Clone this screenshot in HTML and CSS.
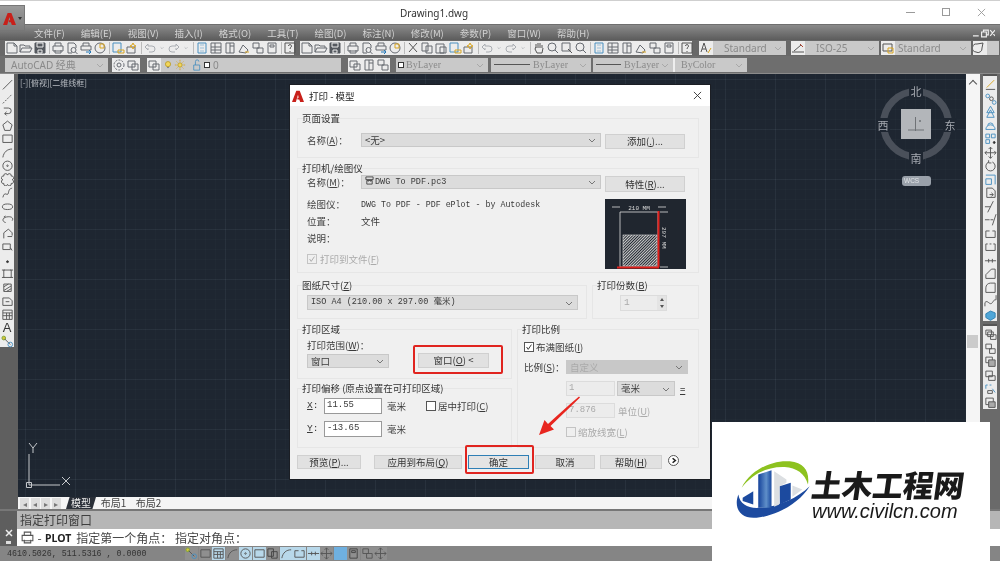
FILE: index.html
```html
<!DOCTYPE html>
<html lang="zh">
<head>
<meta charset="utf-8">
<title>Drawing1.dwg</title>
<link rel="stylesheet" href="styles.css">
</head>
<body>
<svg class="defs" width="0" height="0">
<defs>
<symbol id="new" viewBox="0 0 14 14"><path d="M2 2h7l3 3v7H2zM9 2v3h3"/></symbol>
<symbol id="open" viewBox="0 0 14 14"><path d="M1 11V4h4l1 1h5v2M1 11l2-4h10l-2 4z"/></symbol>
<symbol id="save" viewBox="0 0 14 14"><path class="f" d="M2 2h10v10H2z"/><path class="w" d="M4 2h6v4H4zM5 9h4v3H5z"/></symbol>
<symbol id="print" viewBox="0 0 14 14"><path d="M4 5V2h6v3M2 5h10v5H2zM4 9v3h6V9"/></symbol>
<symbol id="prev" viewBox="0 0 14 14"><path d="M3 2h6l2 2v3M3 2v10h4"/><circle cx="8.500" cy="9" r="2.500"/><path d="M10.500 11l2 2"/></symbol>
<symbol id="pub" viewBox="0 0 14 14"><path d="M4 5V2h6v3M2 5h10v4H2z"/><path class="b" d="M7 11h5M10 9l2 2-2 2"/></symbol>
<symbol id="globe" viewBox="0 0 14 14"><circle cx="7" cy="7" r="5"/><path class="y" d="M7 3h4v4H7z"/></symbol>
<symbol id="setup" viewBox="0 0 14 14"><path class="bl" d="M2 2h8v9H2z"/><path class="y" d="M7 9h6v3H7z"/></symbol>
<symbol id="cam" viewBox="0 0 14 14"><path d="M2 6h8v6H2z"/><path class="y" d="M8 2l1 2 2 1-2 1-1 2-1-2-2-1 2-1z"/></symbol>
<symbol id="undo" viewBox="0 0 14 14"><path class="g" d="M2 6l3-3v2h4a3 3 0 0 1 0 6H6M2 6l3 3V7"/></symbol>
<symbol id="redo" viewBox="0 0 14 14"><path class="g" d="M12 6L9 3v2H5a3 3 0 0 0 0 6h3M12 6L9 9V7"/></symbol>
<symbol id="drop" viewBox="0 0 14 14"><path class="g" d="M5 6l2 2 2-2"/></symbol>
<symbol id="props" viewBox="0 0 14 14"><path class="bl" d="M3 2h8v10H3z"/><path class="w2" d="M5 4h4M5 7h4M5 10h4"/></symbol>
<symbol id="design" viewBox="0 0 14 14"><path d="M2 2h10v10H2zM2 6h10M6 2v10M2 9h10"/></symbol>
<symbol id="tool" viewBox="0 0 14 14"><path d="M3 2h8v10H3zM7 2v10M7 5h4"/></symbol>
<symbol id="sheet" viewBox="0 0 14 14"><path d="M2 11l4-7 5 5-2 3z"/><path class="y" d="M8 11h4"/></symbol>
<symbol id="mark" viewBox="0 0 14 14"><path d="M2 2h6v5H2zM6 7h6v5H6z"/></symbol>
<symbol id="calc" viewBox="0 0 14 14"><path d="M3 2h8v10H3zM5 4h4v2H5z"/></symbol>
<symbol id="help" viewBox="0 0 14 14"><path class="k" d="M2 2h10v10H2zM5.500 5a1.500 1.500 0 1 1 2 1.500L7 8M7 10v1"/></symbol>
<symbol id="cut" viewBox="0 0 14 14"><path class="k" d="M3 2l8 9M11 2l-8 9"/></symbol>
<symbol id="copy" viewBox="0 0 14 14"><path d="M2 2h6v8H2zM6 5h6v7H6z"/></symbol>
<symbol id="paste" viewBox="0 0 14 14"><path d="M2 3h8v9H2zM6 6h6v6H6z"/></symbol>
<symbol id="hand" viewBox="0 0 14 14"><path class="k" d="M4 7V3M6 7V2M8 7V2M10 7V4M4 6L3 8l2 4h5l1-5"/></symbol>
<symbol id="zoom" viewBox="0 0 14 14"><circle cx="6" cy="6" r="4"/><path d="M9 9l3 3"/></symbol>
<symbol id="zoomw" viewBox="0 0 14 14"><path d="M2 2h8v8H2z"/><path class="k" d="M8 8l4 4"/></symbol>
<symbol id="gear" viewBox="0 0 14 14"><circle cx="7" cy="7" r="2"/><circle cx="7" cy="7" r="5" stroke-dasharray="2 1.200"/></symbol>
<symbol id="layer" viewBox="0 0 14 14"><path d="M2 3h7v6H2zM6 6h6v6H6z"/></symbol>
<symbol id="bulb" viewBox="0 0 14 14"><circle class="yf" cx="7" cy="6" r="3"/><path d="M6 10h2"/></symbol>
<symbol id="sun" viewBox="0 0 14 14"><circle class="yf" cx="7" cy="7" r="2.500"/><path class="y" d="M7 1v2M7 11v2M1 7h2M11 7h2M3 3l1 1M10 10l1 1M3 11l1-1M10 4l1-1"/></symbol>
<symbol id="lock" viewBox="0 0 14 14"><path class="bl" d="M2 7h7v6H2zM4 7V3a2 2 0 0 1 4 0"/></symbol>
<symbol id="textst" viewBox="0 0 14 14"><path class="k" d="M2 11l3-9 3 9M3 8h4"/><path class="y" d="M9 12l3-5"/></symbol>
<symbol id="dimst" viewBox="0 0 14 14"><path class="k" d="M1 11h12M3 10l7-6"/><path class="r" d="M9 3l3 3"/></symbol>
<symbol id="tabst" viewBox="0 0 14 14"><path class="k" d="M2 3h9v7H2z"/><path class="y" d="M7 7h5v5H7z"/></symbol>
<symbol id="mlst" viewBox="0 0 14 14"><path class="k" d="M3 11a4 4 0 0 1 1-8l6-1-1 5a4 4 0 0 1-6 4"/></symbol>

<symbol id="line" viewBox="0 0 14 14"><path class="k" d="M2 12L12 2"/></symbol>
<symbol id="xline" viewBox="0 0 14 14"><path class="k" d="M2 12L12 2" stroke-dasharray="2 1.500"/></symbol>
<symbol id="pline" viewBox="0 0 14 14"><path class="k" d="M3 3h5a3 3 0 0 1 0 6H4l2-2M4 9l2 2"/></symbol>
<symbol id="polyg" viewBox="0 0 14 14"><path class="k" d="M7 2l5 4-2 6H4L2 6z"/></symbol>
<symbol id="rect" viewBox="0 0 14 14"><path class="k" d="M2 3h10v8H2z"/></symbol>
<symbol id="arc" viewBox="0 0 14 14"><path class="k" d="M2 12C3 6 7 3 12 3"/></symbol>
<symbol id="circ" viewBox="0 0 14 14"><circle class="k" cx="7" cy="7" r="5"/><circle class="k" cx="7" cy="7" r=".8"/></symbol>
<symbol id="cloud" viewBox="0 0 14 14"><path class="k" d="M3 3a2 2 0 0 1 4-1 2 2 0 0 1 4 1 2 2 0 0 1 1 4 2 2 0 0 1-1 4 2 2 0 0 1-4 1 2 2 0 0 1-4-1 2 2 0 0 1-1-4 2 2 0 0 1 1-4z"/></symbol>
<symbol id="spl" viewBox="0 0 14 14"><path class="k" d="M2 12C4 4 7 12 8 7s2-4 4-5"/></symbol>
<symbol id="ell" viewBox="0 0 14 14"><ellipse class="k" cx="7" cy="7" rx="5.500" ry="3"/></symbol>
<symbol id="ellarc" viewBox="0 0 14 14"><path class="k" d="M5 10C1 9 1 5 6 4s8 1 6 4"/><path class="k" d="M3 4l2-1"/></symbol>
<symbol id="ins" viewBox="0 0 14 14"><path class="k" d="M3 12V6l5-4 4 4v3M7 10h5"/></symbol>
<symbol id="blk" viewBox="0 0 14 14"><path class="k" d="M2 4h8v6H2zM10 8l2 3"/></symbol>
<symbol id="pt" viewBox="0 0 14 14"><circle class="kf" cx="7" cy="8" r="1"/></symbol>
<symbol id="hat" viewBox="0 0 14 14"><path class="k" d="M3 3h8v8H3zM1 3h3M10 3h3M1 11h3M10 11h3"/></symbol>
<symbol id="grad" viewBox="0 0 14 14"><path class="k" d="M3 3h8v8H3zM3 6l5-3M3 10l8-5M6 11l5-3"/></symbol>
<symbol id="reg" viewBox="0 0 14 14"><path class="k" d="M2 4h7l3 3v5H2zM5 8h4"/></symbol>
<symbol id="tab" viewBox="0 0 14 14"><path class="k" d="M2 2h10v10H2zM2 5h10M2 8h10M6 5v7M9 5v7"/></symbol>
<symbol id="addpt" viewBox="0 0 14 14"><circle class="yf2" cx="3" cy="3" r="2"/><path class="k" d="M4 4l6 6"/><circle class="bl" cx="10" cy="10" r="2.500"/></symbol>

<symbol id="erase" viewBox="0 0 14 14"><path class="k" d="M2 12h10"/><path class="y" d="M3 10l8-8"/></symbol>
<symbol id="cpo" viewBox="0 0 14 14"><circle class="bl" cx="4" cy="4" r="2"/><circle class="k" cx="8" cy="7" r="2"/><circle class="bl" cx="11" cy="11" r="2"/></symbol>
<symbol id="mir" viewBox="0 0 14 14"><path class="bl" d="M7 1L3 8h8zM7 5l-4 8h8z"/></symbol>
<symbol id="off" viewBox="0 0 14 14"><path class="bl" d="M2 11a5 5 0 0 1 10 0zM4 7a3 3 0 0 1 6 0"/></symbol>
<symbol id="arr" viewBox="0 0 14 14"><path class="bl" d="M2 2h4v4H2zM8 2h4v4H8zM2 8h4v4H2z"/><circle class="kf" cx="11" cy="11" r="1"/></symbol>
<symbol id="mov" viewBox="0 0 14 14"><path class="k" d="M7 1v12M1 7h12M5 3l2-2 2 2M5 11l2 2 2-2M3 5L1 7l2 2M11 5l2 2-2 2"/></symbol>
<symbol id="rot" viewBox="0 0 14 14"><path class="k" d="M5 3a5 5 0 1 0 4 0M5 1v3h3"/></symbol>
<symbol id="scl" viewBox="0 0 14 14"><path class="bl" d="M2 6h6v6H2zM2 2h10v10"/></symbol>
<symbol id="str" viewBox="0 0 14 14"><path class="k" d="M3 2h6l3 3v7H3zM6 9h4M8 7l2 2-2 2"/></symbol>
<symbol id="trim" viewBox="0 0 14 14"><path class="k" d="M4 13L10 1M1 7h6"/></symbol>
<symbol id="ext" viewBox="0 0 14 14"><path class="k" d="M9 13l4-12M1 7h5M7 7h3"/></symbol>
<symbol id="brk" viewBox="0 0 14 14"><path class="k" d="M2 11V4h4M9 4h3v7H2"/></symbol>
<symbol id="brk2" viewBox="0 0 14 14"><path class="k" d="M2 11V4h2M6 4h2M10 4h2v7H2"/></symbol>
<symbol id="join" viewBox="0 0 14 14"><path class="k" d="M1 7h12M5 5v4M9 5v4"/></symbol>
<symbol id="cham" viewBox="0 0 14 14"><path class="k" d="M2 12V8l6-6h4v10z"/></symbol>
<symbol id="fil" viewBox="0 0 14 14"><path class="k" d="M2 12V7a5 5 0 0 1 5-5h5v10z"/></symbol>
<symbol id="blend" viewBox="0 0 14 14"><path class="k" d="M1 13V9M13 1v5M1 9c3-4 5 4 8 0s2-3 4-3"/></symbol>
<symbol id="expl" viewBox="0 0 14 14"><path class="bf" d="M2 6l5-3 5 2v5l-5 3-5-3z"/></symbol>
<symbol id="d1" viewBox="0 0 14 14"><path class="k" d="M2 2h6v5H2zM4 4h6v5H4zM7 7h6v5H7z"/></symbol>
<symbol id="d2" viewBox="0 0 14 14"><path class="k" d="M2 2h6v5H2zM6 7h6v5H6z"/></symbol>
<symbol id="d3" viewBox="0 0 14 14"><path class="k" d="M2 2h7v6H2z"/><path class="gf" d="M5 5h7v7H5z"/></symbol>
<symbol id="d4" viewBox="0 0 14 14"><path class="k" d="M2 2h7v6H2zM5 7h7v5H5z"/></symbol>
<symbol id="d5" viewBox="0 0 14 14"><path class="bl" d="M2 3h2M6 3h2M2 3v4M9 7l3 4"/><path class="k" d="M4 9h5v3H4z"/></symbol>
<symbol id="d6" viewBox="0 0 14 14"><path class="k" d="M2 2h8v7H2z"/><path class="gf" d="M5 6h7v6H5z"/></symbol>

<symbol id="chev" viewBox="0 0 10 10"><path d="M2 4l3 3 3-3"/></symbol>
<symbol id="logoA" viewBox="0 0 14 14"><path class="ared" d="M0 14L5 1h4l5 13H9.500l-1-3H6.300V9h1.500L7 5.500 4.500 14z"/></symbol>
</defs>
</svg>

<div class="stage">
  <header class="titlebar">
    <div class="doc-title">Drawing1.dwg</div>
    <div class="win-btns">
      <span class="wb wb-min"></span>
      <span class="wb wb-max"></span>
      <svg class="wb-x" viewBox="0 0 10 10"><path d="M1 1l8 8M9 1l-8 8"/></svg>
    </div>
  </header>

  <nav class="menubar">
    <span>文件(F)</span><span>编辑(E)</span><span>视图(V)</span><span>插入(I)</span><span>格式(O)</span><span>工具(T)</span><span>绘图(D)</span><span>标注(N)</span><span>修改(M)</span><span>参数(P)</span><span>窗口(W)</span><span>帮助(H)</span>
    <svg class="menu-ctl" viewBox="0 0 24 10"><path d="M1 8h6M10 4h5v5h-5zM12 4V2h5v5h-2M19 2l5 6M24 2l-5 6"/></svg>
  </nav>

  <div class="tbar tbar-1">
    <div class="igroup igroup-a">
      <svg class="i"><use href="#new"/></svg><svg class="i"><use href="#open"/></svg><svg class="i"><use href="#save"/></svg><i class="sep"></i>
      <svg class="i"><use href="#print"/></svg><svg class="i"><use href="#prev"/></svg><svg class="i"><use href="#pub"/></svg><svg class="i"><use href="#globe"/></svg><i class="sep"></i>
      <svg class="i"><use href="#setup"/></svg><svg class="i"><use href="#cam"/></svg><i class="sep"></i>
      <svg class="i"><use href="#undo"/></svg><svg class="i i-n"><use href="#drop"/></svg><svg class="i"><use href="#redo"/></svg><svg class="i i-n"><use href="#drop"/></svg><i class="sep"></i>
      <svg class="i"><use href="#props"/></svg><svg class="i"><use href="#design"/></svg><svg class="i"><use href="#tool"/></svg><svg class="i"><use href="#sheet"/></svg><svg class="i"><use href="#mark"/></svg><svg class="i"><use href="#calc"/></svg><i class="sep"></i><svg class="i"><use href="#help"/></svg>
    </div>
    <div class="igroup igroup-b">
      <svg class="i"><use href="#new"/></svg><svg class="i"><use href="#open"/></svg><svg class="i"><use href="#save"/></svg><i class="sep"></i>
      <svg class="i"><use href="#print"/></svg><svg class="i"><use href="#prev"/></svg><svg class="i"><use href="#pub"/></svg><svg class="i"><use href="#globe"/></svg><i class="sep"></i>
      <svg class="i"><use href="#cut"/></svg><svg class="i"><use href="#copy"/></svg><svg class="i"><use href="#paste"/></svg><svg class="i"><use href="#setup"/></svg><svg class="i"><use href="#cam"/></svg><i class="sep"></i>
      <svg class="i"><use href="#undo"/></svg><svg class="i i-n"><use href="#drop"/></svg><svg class="i"><use href="#redo"/></svg><svg class="i i-n"><use href="#drop"/></svg><i class="sep"></i>
      <svg class="i"><use href="#hand"/></svg><svg class="i"><use href="#zoom"/></svg><svg class="i"><use href="#zoomw"/></svg><svg class="i"><use href="#zoom"/></svg><i class="sep"></i>
      <svg class="i"><use href="#props"/></svg><svg class="i"><use href="#design"/></svg><svg class="i"><use href="#tool"/></svg><svg class="i"><use href="#sheet"/></svg><svg class="i"><use href="#mark"/></svg><svg class="i"><use href="#calc"/></svg><i class="sep"></i><svg class="i"><use href="#help"/></svg>
    </div>
    <svg class="i i-box ib-a"><use href="#textst"/></svg>
    <div class="combo combo-std1">Standard<svg class="cv"><use href="#chev"/></svg></div>
    <svg class="i i-box ib-b"><use href="#dimst"/></svg>
    <div class="combo combo-iso">ISO-25<svg class="cv"><use href="#chev"/></svg></div>
    <svg class="i i-box ib-c"><use href="#tabst"/></svg>
    <div class="combo combo-std2">Standard<svg class="cv"><use href="#chev"/></svg></div>
    <svg class="i i-box ib-d"><use href="#mlst"/></svg>
    <div class="combo combo-rest"></div>
  </div>

  <div class="tbar tbar-2">
    <div class="combo combo-work">AutoCAD 经典<svg class="cv"><use href="#chev"/></svg></div>
    <div class="igroup igroup-c"><svg class="i"><use href="#gear"/></svg><svg class="i"><use href="#layer"/></svg></div>
    <svg class="i i-box ib-e"><use href="#layer"/></svg>
    <div class="combo combo-layer">
      <svg class="i i-n2"><use href="#bulb"/></svg><svg class="i i-n2"><use href="#sun"/></svg><svg class="i i-n3"></svg><svg class="i i-n2"><use href="#lock"/></svg><span class="swatch"></span><span class="layer-0">0</span>
    </div>
    <div class="igroup igroup-d"><svg class="i"><use href="#layer"/></svg><svg class="i"><use href="#tool"/></svg><svg class="i"><use href="#mark"/></svg></div>
    <div class="combo combo-by mono combo-by1"><span class="swatch"></span>ByLayer<svg class="cv"><use href="#chev"/></svg></div>
    <div class="combo combo-by mono combo-by2"><i class="ln ln-a"></i>ByLayer<svg class="cv"><use href="#chev"/></svg></div>
    <div class="combo combo-by mono combo-by3"><i class="ln ln-b"></i>ByLayer<svg class="cv"><use href="#chev"/></svg></div>
    <div class="combo combo-by mono combo-by4">ByColor<svg class="cv"><use href="#chev"/></svg></div>
  </div>

  <main class="workspace">
    <aside class="side-left">
      <div class="side-tools">
        <svg class="s"><use href="#line"/></svg><svg class="s"><use href="#xline"/></svg><svg class="s"><use href="#pline"/></svg><svg class="s"><use href="#polyg"/></svg><svg class="s"><use href="#rect"/></svg><svg class="s"><use href="#arc"/></svg><svg class="s"><use href="#circ"/></svg><svg class="s"><use href="#cloud"/></svg><svg class="s"><use href="#spl"/></svg><svg class="s"><use href="#ell"/></svg><svg class="s"><use href="#ellarc"/></svg><svg class="s"><use href="#ins"/></svg><svg class="s"><use href="#blk"/></svg><svg class="s"><use href="#pt"/></svg><svg class="s"><use href="#hat"/></svg><svg class="s"><use href="#grad"/></svg><svg class="s"><use href="#reg"/></svg><svg class="s"><use href="#tab"/></svg><span class="s-text">A</span><svg class="s"><use href="#addpt"/></svg>
      </div>
    </aside>
    <div class="canvas-col">
      <div class="canvas">
        <div class="viewlabel">[-][俯视][二维线框]</div>
        <div class="compass">
          <div class="ring"></div>
          <div class="cube"><svg viewBox="0 0 30 30" class="cube-svg"><path d="M14.500 8v14M7 21h16M18 12h2M19 11v2"/></svg></div>
          <span class="dir d-n">北</span><span class="dir d-s">南</span><span class="dir d-w">西</span><span class="dir d-e">东</span>
          <span class="wcs">WCS</span>
        </div>
        <svg class="ucs" viewBox="0 -5 50 55"><path d="M9 9v31M9 40h31M6.500 37.500h5v5h-5zM42 32l8 8M50 32l-8 8M13 3v5M13 3L9 -2M13 3l4-5"/></svg>
      </div>
      <div class="tabs">
        <div class="navs"><span>◂</span><span>◂</span><span>▸</span><span>▸</span></div>
        <span class="tab tab-on">模型</span><span class="tab">布局1</span><span class="tab">布局2</span>
      </div>
    </div>
    <div class="scroll"><span class="up"></span><span class="thumb"></span></div>
    <aside class="side-right">
      <div class="rgroup">
        <svg class="s"><use href="#erase"/></svg><svg class="s"><use href="#cpo"/></svg><svg class="s"><use href="#mir"/></svg><svg class="s"><use href="#off"/></svg><svg class="s"><use href="#arr"/></svg><svg class="s"><use href="#mov"/></svg><svg class="s"><use href="#rot"/></svg><svg class="s"><use href="#scl"/></svg><svg class="s"><use href="#str"/></svg><svg class="s"><use href="#trim"/></svg><svg class="s"><use href="#ext"/></svg><svg class="s"><use href="#brk"/></svg><svg class="s"><use href="#brk2"/></svg><svg class="s"><use href="#join"/></svg><svg class="s"><use href="#cham"/></svg><svg class="s"><use href="#fil"/></svg><svg class="s"><use href="#blend"/></svg><svg class="s"><use href="#expl"/></svg>
      </div>
      <div class="rgroup rgroup-2">
        <svg class="s"><use href="#d1"/></svg><svg class="s"><use href="#d2"/></svg><svg class="s"><use href="#d3"/></svg><svg class="s"><use href="#d4"/></svg><svg class="s"><use href="#d5"/></svg><svg class="s"><use href="#d6"/></svg>
      </div>
    </aside>
  </main>

  <section class="cmd">
    <div class="cmd-side">
      <svg class="cmd-x" viewBox="0 0 10 10"><path d="M2 2l6 6M8 2l-6 6"/></svg>
      <span class="cmd-mini"></span>
    </div>
    <div class="cmd-main">
      <div class="cmd-hist">指定打印窗口</div>
      <div class="cmd-line">
        <svg class="cmd-ico"><use href="#print"/></svg><span class="cmd-dash">-</span><b>PLOT</b><span>指定第一个角点： 指定对角点：</span>
      </div>
    </div>
  </section>

  <footer class="status">
    <div class="coords">4610.5026, 511.5316 , 0.0000</div>
    <div class="st-icons">
      <svg class="st"><use href="#addpt"/></svg><svg class="st"><use href="#rect"/></svg><svg class="st st-on"><use href="#tab"/></svg><svg class="st"><use href="#arc"/></svg><svg class="st st-on"><use href="#circ"/></svg><svg class="st st-on"><use href="#rect"/></svg><svg class="st"><use href="#copy"/></svg><svg class="st st-on"><use href="#arc"/></svg><svg class="st st-on"><use href="#brk"/></svg><svg class="st st-on"><use href="#join"/></svg><svg class="st"><use href="#mov"/></svg><span class="st-big"></span><svg class="st"><use href="#calc"/></svg><svg class="st"><use href="#d2"/></svg><svg class="st"><use href="#mov"/></svg>
    </div>
  </footer>

  <div class="appbtn"><svg class="appA"><use href="#logoA"/></svg><span class="appdrop"></span></div>

  <div class="dlg">
    <div class="dlg-title">
      <svg class="dlg-ico"><use href="#logoA"/></svg>
      <span>打印 - 模型</span>
      <svg class="dlg-x" viewBox="0 0 10 10"><path d="M1 1l8 8M9 1l-8 8"/></svg>
    </div>
    <div class="dlg-body">
      <div class="grp">
        <span class="glabel">页面设置</span>
        <div class="gbox g-page">
          <div class="frow">
            <span class="lb lb-name">名称(<u>A</u>)：</span>
            <div class="sel s-name">&lt;无&gt;<svg class="cv"><use href="#chev"/></svg></div>
            <div class="btn b-side">添加(<u>.</u>)...</div>
          </div>
        </div>
      </div>

      <div class="grp grp-printer">
        <span class="glabel">打印机/绘图仪</span>
        <div class="gbox g-printer">
          <div class="frow">
            <span class="lb lb-name">名称(<u>M</u>)：</span>
            <div class="sel s-name s-mono"><svg class="plotter" viewBox="0 0 10 10"><path d="M1 1h8v3H1zM2 5h6v4H2zM3 6h1M6 6h1"/></svg>DWG To PDF.pc3<svg class="cv"><use href="#chev"/></svg></div>
            <div class="btn b-side b-tall">特性(<u>R</u>)...</div>
          </div>
          <div class="pr-detail">
            <div class="pr-info">
              <div class="info"><span class="lb lb-name">绘图仪：</span><span class="mono">DWG To PDF - PDF ePlot - by Autodesk</span></div>
              <div class="info"><span class="lb lb-name">位置：</span><span>文件</span></div>
              <div class="info"><span class="lb lb-name">说明：</span></div>
              <div class="info info-chk off"><span class="chk chk-off"><svg viewBox="0 0 10 10"><path d="M2 5l2 3 4-6"/></svg></span>打印到文件(<u>F</u>)</div>
            </div>
            <svg class="paper" viewBox="0 0 81 70">
              <defs><pattern id="hatch" width="2" height="2" patternUnits="userSpaceOnUse" patternTransform="rotate(45)"><rect width="1" height="2" fill="#cfcfcf"/></pattern></defs>
              <rect width="81" height="70" fill="#20262f"/>
              <path class="pw" d="M15 13h38v55H15z"/>
              <rect x="18" y="36" width="34" height="31" fill="url(#hatch)" stroke="#ddd" stroke-width=".6"/>
              <path class="pw" d="M7 8h8M53 8h8M55 13h8M55 68h8"/>
              <text class="ptxt" x="34" y="11" text-anchor="middle">210 MM</text>
              <text class="ptxt" x="0" y="0" transform="translate(57 28) rotate(90)">297 MM</text>
              <path class="pr" d="M53.500 12v56M12 68.500h42"/>
            </svg>
          </div>
        </div>
      </div>

      <div class="two-top">
        <div class="grp grp-paper">
          <span class="glabel">图纸尺寸(<u>Z</u>)</span>
          <div class="gbox g-paper">
            <div class="sel s-paper s-mono">ISO A4 (210.00 x 297.00 毫米)<svg class="cv"><use href="#chev"/></svg></div>
          </div>
        </div>
        <div class="grp grp-copies">
          <span class="glabel">打印份数(<u>B</u>)</span>
          <div class="gbox g-copies">
            <div class="spin"><span class="mono">1</span><span class="spinb"><i class="tri-u"></i><i class="tri-d"></i></span></div>
          </div>
        </div>
      </div>

      <div class="two-main">
        <div class="col-left">
          <div class="grp">
            <span class="glabel">打印区域</span>
            <div class="gbox g-area">
              <div class="sublb">打印范围(<u>W</u>)：</div>
              <div class="area-row">
                <div class="sel s-range">窗口<svg class="cv"><use href="#chev"/></svg></div>
                <div class="btn b-win">窗口(<u>O</u>) &lt;</div>
              </div>
            </div>
          </div>
          <div class="grp grp-offset">
            <span class="glabel">打印偏移 (原点设置在可打印区域)</span>
            <div class="gbox g-offset">
              <div class="off-row">
                <span class="axis"><u>X</u>:</span><span class="inp inp-off mono">11.55</span><span class="unit">毫米</span>
                <span class="chk"></span><span class="center-lb">居中打印(<u>C</u>)</span>
              </div>
              <div class="off-row off-row-2">
                <span class="axis"><u>Y</u>:</span><span class="inp inp-off mono">-13.65</span><span class="unit">毫米</span>
              </div>
            </div>
          </div>
        </div>
        <div class="grp grp-scale">
          <span class="glabel">打印比例</span>
          <div class="gbox g-scale">
            <div class="sc-row"><span class="chk"><svg viewBox="0 0 10 10"><path d="M2 5l2 3 4-6"/></svg></span><span class="chk-lb">布满图纸(<u>I</u>)</span></div>
            <div class="sc-row sc-2"><span class="sc-lb">比例(<u>S</u>)：</span><div class="sel s-ratio dis">自定义<svg class="cv"><use href="#chev"/></svg></div></div>
            <div class="sc-row sc-3"><span class="inp inp-sc mono dis">1</span><div class="sel s-unit">毫米<svg class="cv"><use href="#chev"/></svg></div><span class="eq">=</span></div>
            <div class="sc-row sc-4"><span class="inp inp-sc mono dis">7.876</span><span class="unit-lb dis">单位(<u>U</u>)</span></div>
            <div class="sc-row sc-5"><span class="chk chk-off"></span><span class="chk-lb dis">缩放线宽(<u>L</u>)</span></div>
          </div>
        </div>
      </div>

      <div class="dlg-foot">
        <div class="btn f-prev">预览(<u>P</u>)...</div>
        <div class="btn f-apply">应用到布局(<u>Q</u>)</div>
        <div class="btn f-ok">确定</div>
        <div class="btn f-cancel">取消</div>
        <div class="btn f-help">帮助(<u>H</u>)</div>
        <span class="more"><svg viewBox="0 0 10 10"><path d="M4 2.500L7 5 4 7.500"/></svg></span>
      </div>
    </div>
  </div>

  <span class="mark m-win"></span>
  <span class="mark m-ok"></span>
  <svg class="arrow" viewBox="0 0 46 42"><path d="M43 1.500C33 10 22 20 12 29L8.500 25 3 40l15-5.500-3.500-3.500C25 21 35 11 44 2.500z"/></svg>

  <div class="logo">
    <svg class="logo-mark" viewBox="75 115 235 190">
      <defs><linearGradient id="bar" x1="0" x2="1"><stop offset="0" stop-color="#15429a"/><stop offset=".6" stop-color="#5f8fc9"/><stop offset="1" stop-color="#1a4aa0"/></linearGradient></defs>
      <path class="lg-g" d="M95 205C120 150 190 120 240 125c45 5 60 30 55 70-10-35-35-50-70-53-55-2-100 23-130 63z"/>
      <path class="lg-b" d="M300 200c-30 50-100 90-160 95-50 5-70-30-55-70 5 30 30 43 65 40 55-3 115-30 150-65z"/>
      <path class="lg-b" d="M98 235l32-20v40l-32-10z"/>
      <path fill="url(#bar)" d="M145 165l40-13v113h-40z"/>
      <path class="lg-l" d="M193 155l37 25v10l-20 10-2 55-15 7z"/>
      <path class="lg-b" d="M210 200l33-10v50l-33 15z"/>
      <path class="lg-l" d="M248 198l30 12-30 22z"/>
    </svg>
    <div class="logo-text">
      <div class="logo-cn">土木工程网</div>
      <div class="logo-en">www.civilcn.com</div>
    </div>
  </div>
</div>
</body>
</html>
```

FILE: styles.css
```css
* { box-sizing: border-box; }
html, body { margin: 0; padding: 0; }
body { width: 1000px; height: 561px; overflow: hidden; background: #6a6a6a; font-family: "Noto Sans CJK SC", "Liberation Sans", sans-serif; }
.defs { position: absolute; }
.stage { position: relative; width: 1000px; height: 561px; display: flex; flex-direction: column; filter: blur(.35px); background: #6a6a6a; overflow: hidden; }
u { text-decoration: underline; }
i { font-style: normal; }
.mono { font-family: "Liberation Mono", "Noto Sans CJK SC", monospace; }

/* icon strokes */
.i, .s, .st { fill: none; stroke: #666a71; stroke-width: 1; flex: none; }
.f { fill: #55595f; stroke: #55595f; }
.w { stroke: #eee; }
.w2 { stroke: #9cc0d8; }
.b { stroke: #2378b8; }
.y { stroke: #d9a520; }
.yf { fill: #f2d65a; stroke: #b99a28; }
.yf2 { fill: #d5c53a; stroke: #7ea43a; }
.bl { stroke: #4a90c0; }
.bf { fill: #4fa6d8; stroke: #2f7fb0; }
.g { stroke: #a9adb2; }
.k { stroke: #555; }
.kf { fill: #333; stroke: #333; }
.gf { fill: #aaa; stroke: #555; }
.r { stroke: #b5402a; }
.ared { fill: #c8201a; stroke: none; }

/* title */
.titlebar { height: 24px; flex: none; background: #fff; border-top: 1px solid #cfcfcf; display: flex; justify-content: center; align-items: center; position: relative; }
.doc-title { font: 10px "Noto Sans", "Liberation Sans", sans-serif; color: #333; margin-left: -132px; }
.win-btns { position: absolute; right: 14px; top: 0; height: 22px; display: flex; align-items: center; gap: 27px; }
.wb { display: block; }
.wb-min { width: 9px; height: 1px; background: #9a9a9a; }
.wb-max { width: 8px; height: 8px; border: 1px solid #9a9a9a; }
.wb-x { width: 9px; height: 9px; fill: none; stroke: #9a9a9a; }

.appbtn { position: absolute; left: 0; top: 5px; width: 25px; height: 26px; background: linear-gradient(#9a9a9a, #7d7d7d); border: 1px solid #777; border-left: 0; display: flex; align-items: center; padding-left: 3px; }
.appA { width: 13px; height: 15px; }
.appdrop { margin-left: 2px; border: 2px solid transparent; border-top: 3px solid #333; margin-top: 3px; }

/* menu */
.menubar { height: 16px; flex: none; background: linear-gradient(#8b8b8b, #5c5c5c); border-top: 1px solid #6f6f6f; display: flex; align-items: center; gap: 16px; padding-left: 34px; font-size: 9.500px; color: #d2d2d2; position: relative; }
.menu-ctl { position: absolute; left: 972px; top: 3px; width: 23px; height: 10px; fill: none; stroke: #eee; stroke-width: 1.200; }

/* toolbars */
.tbar { flex: none; background: #686868; display: flex; align-items: center; }
.tbar-1 { height: 16px; padding-left: 5px; }
.tbar-2 { height: 18px; padding-left: 5px; border-bottom: 1px solid #8b8b8b; background: #6e6e6e; }
.igroup { background: #ececec; display: flex; align-items: center; height: 14px; }
.igroup-a { width: 289px; }
.igroup-b { width: 392px; margin-left: 6px; }
.igroup .i { width: 14px; height: 14px; }
.igroup .i-n { width: 10px; }
.sep { width: 1px; height: 12px; background: #bbb; margin: 0 1px 0 2px; flex: none; }
.i-box { width: 14px; height: 14px; background: #ececec; }
.ib-a { margin-left: 7px; }
.ib-b { margin-left: 5px; }
.ib-c { margin-left: 2px; }
.ib-d { margin-left: 2px; }
.combo { background: #c9c9c9; color: #8a8a8a; height: 14px; display: flex; align-items: center; font: 10px "Noto Sans", "Noto Sans CJK SC", sans-serif; position: relative; flex: none; }
.cv { position: absolute; right: 3px; top: 50%; margin-top: -5px; width: 10px; height: 10px; fill: none; stroke: #777; }
.combo .cv { stroke: #a8a8a8; }
.combo-std1 { width: 73px; padding-left: 11px; }
.combo-iso { width: 74px; padding-left: 11px; }
.combo-std2 { width: 76px; padding-left: 3px; }
.combo-rest { width: 12px; }
.combo-work { width: 103px; padding-left: 6px; }
.igroup-c { width: 28px; margin-left: 4px; }
.ib-e { margin-left: 7px; }
.combo-layer { width: 180px; padding-left: 1px; gap: 0; }
.combo-layer .i { width: 12px; height: 14px; }
.combo-layer .i-n3 { width: 6px; }
.layer-0 { font-size: 10px; margin-left: 3px; }
.swatch { width: 6px; height: 6px; border: 1px solid #333; background: #fff; display: block; flex: none; }
.igroup-d { width: 42px; margin-left: 7px; }
.combo-by { font-family: "Liberation Serif", serif; font-size: 10px; }
.combo-by1 { width: 92px; margin-left: 6px; padding-left: 2px; gap: 2px; }
.combo-by2 { width: 100px; margin-left: 3px; padding-left: 3px; }
.combo-by3 { width: 80px; margin-left: 2px; padding-left: 3px; }
.combo-by4 { width: 74px; padding-left: 6px; border-left: 2px solid #eee; }
.ln { height: 1px; background: #555; display: block; flex: none; margin-right: 3px; }
.ln-a { width: 36px; }
.ln-b { width: 25px; }

/* workspace */
.workspace { height: 437px; flex: none; display: flex; }
.side-left { width: 18px; flex: none; background: #5f5f5f; padding-right: 4px; }
.side-tools { background: #ececec; padding-top: 4px; height: 273px; display: flex; flex-direction: column; align-items: center; }
.s { width: 13px; height: 13.500px; display: block; }
.s-text { height: 13.500px; line-height: 13.500px; font: 13px/13.500px "Liberation Sans", sans-serif; color: #333; }
.canvas-col { width: 948px; flex: none; display: flex; flex-direction: column; }
.canvas { height: 423px; flex: none; position: relative; background-color: #1e2631; background-image: linear-gradient(90deg, rgba(120,135,155,.09) 1px, transparent 1px), linear-gradient(rgba(120,135,155,.09) 1px, transparent 1px), linear-gradient(90deg, rgba(120,135,155,.03) 1px, transparent 1px), linear-gradient(rgba(120,135,155,.03) 1px, transparent 1px); background-size: 50px 50px, 50px 50px, 10px 10px, 10px 10px; background-position: 7px 0, 0 5px, 7px 0, 0 5px; overflow: hidden; }
.viewlabel { position: absolute; left: 2px; top: 3px; font-size: 8px; line-height: 12px; color: #b8bcc2; }
.compass { position: absolute; left: 0; top: 0; width: 948px; height: 423px; }
.ring { position: absolute; left: 862px; top: 14px; width: 72px; height: 72px; border: 7px solid #4a505a; border-radius: 50%; }
.cube { position: absolute; left: 883px; top: 35px; width: 30px; height: 30px; background: #b3b6ba; }
.cube-svg { display: block; width: 30px; height: 30px; fill: none; stroke: #6f7276; }
.dir { position: absolute; width: 14px; height: 14px; line-height: 14px; text-align: center; font-size: 11px; color: #a7abb2; background: #1e2631; }
.d-n { left: 891px; top: 10px; }
.d-s { left: 891px; top: 77px; }
.d-w { left: 858px; top: 44px; }
.d-e { left: 925px; top: 44px; }
.wcs { position: absolute; left: 884px; top: 102px; width: 29px; height: 10px; border-radius: 3px; background: #9aa1aa; color: #e2e4e7; font: 6.500px/10px "Liberation Sans", sans-serif; padding-left: 2px; }
.ucs { position: absolute; left: 2px; top: 366px; width: 50px; height: 55px; fill: none; stroke: #c5c8cc; stroke-width: 1; }
.tabs { height: 14px; flex: none; background: #f5f5f5; display: flex; align-items: flex-start; padding-left: 2px; font-size: 10px; color: #444; }
.navs { display: flex; width: 46px; gap: 1.500px; font-size: 8px; color: #777; padding-top: 1px; }
.navs span { width: 9px; height: 11px; line-height: 11px; text-align: center; background: #ddd; }
.tab { width: 35px; height: 12px; line-height: 12px; text-align: center; clip-path: polygon(0 100%, 12% 0, 100% 0, 88% 100%); }
.tab-on { background: #2a2f38; color: #eee; width: 30px; }
.scroll { width: 14px; flex: none; background: #f5f5f5; height: 423px; position: relative; }
.up { position: absolute; left: 4px; top: 7px; width: 6px; height: 6px; border-left: 1px solid #555; border-top: 1px solid #555; transform: rotate(45deg); }
.thumb { position: absolute; left: 1px; top: 261px; width: 11px; height: 13px; background: #cbcbcb; }
.side-right { width: 20px; flex: none; background: #6a6a6a; padding: 0 3px 0 3px; }
.rgroup { background: #ececec; padding-top: 2px; width: 14px; border-top: 2px solid #555; display: flex; flex-direction: column; align-items: center; }
.rgroup-2 { margin-top: 3px; }

/* command */
.cmd { height: 37px; flex: none; display: flex; margin-top: -2px; background: #777; padding-top: 2px; }
.cmd-side { width: 17px; flex: none; background: #5e5e5e; display: flex; flex-direction: column; align-items: center; justify-content: flex-end; padding-bottom: 2px; gap: 3px; }
.cmd-x { width: 10px; height: 10px; stroke: #eee; stroke-width: 1.500; fill: none; }
.cmd-mini { width: 5px; height: 3px; background: #ddd; }
.cmd-main { flex: 1; display: flex; flex-direction: column; }
.cmd-hist { height: 18px; background: #b6b6b6; color: #3f3f3f; font-size: 12px; line-height: 18px; padding-left: 3px; }
.cmd-line { height: 17px; background: #fff; color: #444; display: flex; align-items: center; padding-left: 3px; font-size: 12px; }
.cmd-ico { width: 15px; height: 15px; fill: none; stroke: #555; }
.cmd-dash { width: 9px; text-align: center; }
.cmd-line b { font: bold 10.500px "Noto Sans", sans-serif; color: #222; margin: 0 5px 0 1px; }

/* status */
.status { height: 15px; flex: none; background: #858585; display: flex; align-items: center; padding-left: 7px; }
.coords { width: 178px; font: 8.300px "Liberation Mono", monospace; color: #333; flex: none; }
.st-icons { display: flex; gap: .5px; }
.st { width: 13px; height: 13px; background: #8f8f8f; stroke: #444; }
.st-on { background: #b8d8ea; }
.st-big { width: 13px; height: 13px; background: #6fb0e0; display: block; flex: none; }

/* dialog */
.dlg { position: absolute; left: 290px; top: 85px; width: 420px; height: 394px; background: #f0f0f0; box-shadow: 0 0 0 1px #1b1e24; color: #3a3a3a; font-size: 9.500px; line-height: 12px; }
.dlg-title { height: 21px; background: #fff; display: flex; align-items: center; padding-left: 2px; font-size: 9.500px; color: #222; position: relative; }
.dlg-ico { width: 12px; height: 12px; margin-right: 5px; background: #fff; }
.dlg-x { position: absolute; right: 8px; top: 6px; width: 9px; height: 9px; stroke: #333; fill: none; }
.dlg-body { padding: 6px 0 0 7px; width: 409px; }
.grp { display: block; }
.glabel { display: block; height: 12px; line-height: 12px; padding-left: 5px; position: relative; color: #333; white-space: nowrap; }
.gbox { margin-top: -6px; border: 1px solid #e6e6e6; }
.grp-printer { margin-top: 4px; }
.g-page { height: 40px; padding: 14px 0 0 9px; }
.g-printer { height: 105px; padding: 6px 0 0 9px; }
.frow { display: flex; align-items: flex-start; }
.lb { display: block; flex: none; }
.lb-name { width: 54px; color: #444; line-height: 14px; }
.sel { height: 14px; background: #dcdcdc; border: 1px solid #c8c8c8; line-height: 12px; padding-left: 3px; position: relative; flex: none; white-space: nowrap; }
.s-name { width: 240px; }
.s-mono { font-family: "Liberation Mono", "Noto Sans CJK SC", monospace; font-size: 8.500px; display: block; }
.plotter { width: 9px; height: 9px; fill: none; stroke: #444; display: inline-block; vertical-align: -1px; margin-right: 1px; }
.btn { background: #e1e1e1; border: 1px solid #d0d0d0; text-align: center; line-height: 13px; color: #333; flex: none; white-space: nowrap; }
.b-side { width: 80px; height: 15px; margin-left: 4px; margin-top: 1px; }
.b-tall { height: 16px; line-height: 14px; }
.pr-detail { display: flex; align-items: flex-start; }
.pr-info { width: 298px; margin-top: 4px; flex: none; }
.info { height: 17px; line-height: 17px; display: flex; align-items: center; }
.info .lb-name { line-height: 17px; }
.info .mono { font-size: 8.300px; }
.info-chk { margin-top: 3px; height: 18px; color: #aaa; }
.off .chk { margin-right: 3px; }
.paper { width: 81px; height: 70px; margin-top: 7px; flex: none; display: block; }
.pw { fill: none; stroke: #ddd; stroke-width: .8; }
.pr { fill: none; stroke: #e0201c; stroke-width: 2; }
.ptxt { font: 6px "Liberation Mono", monospace; fill: #ddd; }
.chk { width: 10px; height: 10px; border: 1px solid #555; background: #fff; display: block; flex: none; }
.chk svg { display: block; width: 8px; height: 8px; fill: none; stroke: #333; stroke-width: 1.200; }
.chk-off { border-color: #c4c4c4; background: #efefef; }
.chk-off svg { stroke: #aaa; }
.two-top { display: flex; gap: 5px; margin-top: 6px; }
.grp-paper { width: 290px; }
.grp-copies { width: 107px; }
.g-paper { height: 34px; padding: 9px 0 0 9px; }
.s-paper { width: 271px; height: 15px; line-height: 13px; }
.g-copies { height: 34px; padding: 9px 0 0 27px; }
.spin { width: 47px; height: 16px; background: #ececec; border: 1px solid #dcdcdc; display: flex; justify-content: space-between; align-items: center; padding-left: 3px; color: #aaa; }
.spinb { width: 9px; height: 14px; display: flex; flex-direction: column; justify-content: space-around; align-items: center; background: #e4e4e4; }
.tri-u, .tri-d { display: block; border: 2px solid transparent; }
.tri-u { border-bottom: 3px solid #555; border-top: 0; }
.tri-d { border-top: 3px solid #555; border-bottom: 0; }
.two-main { display: flex; gap: 5px; margin-top: 4px; }
.col-left { width: 215px; }
.g-area { height: 50px; padding: 9px 0 0 9px; }
.sublb { height: 14px; line-height: 12px; }
.area-row { display: flex; align-items: flex-start; }
.s-range { width: 82px; margin-top: 1px; }
.b-win { width: 71px; height: 15px; margin-left: 29px; }
.grp-offset { margin-top: 3px; }
.g-offset { height: 60px; padding: 9px 0 0 9px; }
.off-row { display: flex; align-items: center; height: 16px; }
.off-row-2 { margin-top: 7px; }
.axis { width: 17px; font-family: "Liberation Mono", monospace; flex: none; }
.inp { background: #fff; border: 1px solid #999; display: block; flex: none; padding-left: 2px; font-size: 9px; }
.inp-off { width: 58px; height: 16px; line-height: 13px; }
.unit { width: 44px; padding-left: 5px; flex: none; }
.center-lb { margin-left: 2px; white-space: nowrap; }
.grp-scale { width: 182px; }
.g-scale { height: 119px; padding: 11px 0 0 6px; }
.sc-row { display: flex; align-items: center; height: 12px; }
.chk-lb { margin-left: 2px; }
.sc-2 { margin-top: 7px; height: 14px; }
.sc-lb { width: 42px; flex: none; }
.s-ratio { width: 122px; background: #c8c8c8; }
.dis { color: #aaa; }
.sc-3 { margin-top: 7px; margin-left: 42px; height: 15px; }
.inp-sc { width: 49px; height: 15px; line-height: 13px; background: #ececec; border-color: #dcdcdc; }
.s-unit { width: 58px; margin-left: 2px; height: 15px; }
.eq { margin-left: 5px; text-decoration: underline; }
.sc-4 { margin-top: 7px; margin-left: 42px; height: 15px; }
.unit-lb { margin-left: 3px; }
.sc-5 { margin-top: 8px; margin-left: 42px; }
.dlg-foot { display: flex; margin-top: 7px; align-items: flex-start; }
.dlg-foot .btn { height: 14px; line-height: 12px; }
.f-prev { width: 64px; }
.f-apply { width: 88px; margin-left: 13px; }
.dlg-foot .f-ok { width: 61px; margin-left: 6px; border: 1px solid #2f7fb5; background: #e4e4e4; }
.f-cancel { width: 60px; margin-left: 6px; }
.f-help { width: 62px; margin-left: 5px; }
.more { width: 11px; height: 11px; border-radius: 50%; background: #fff; border: 1px solid #555; margin-left: 6px; display: block; }
.more svg { display: block; width: 9px; height: 9px; fill: none; stroke: #222; stroke-width: 1.800; }

/* annotations */
.mark { position: absolute; display: block; border: 2.500px solid #e0241f; border-radius: 2px; }
.m-win { left: 413px; top: 345px; width: 90px; height: 29px; }
.m-ok { left: 465px; top: 445px; width: 69px; height: 29px; }
.arrow { position: absolute; left: 536px; top: 395px; width: 46px; height: 42px; fill: #e8261f; }

/* logo */
.logo { position: absolute; left: 712px; top: 422px; width: 278px; height: 139px; background: #fff; display: flex; align-items: flex-start; padding: 36px 0 0 23px; }
.logo-mark { width: 78px; height: 63px; flex: none; display: block; }
.lg-g { fill: #8dc21f; }
.lg-b { fill: #1c4a9f; }
.lg-l { fill: #dcdfe2; }
.logo-text { margin-left: -1px; padding-top: 11px; color: #1a1a1a; }
.logo-cn { font: 900 30.500px/31px "Noto Sans CJK SC", sans-serif; white-space: nowrap; transform: skewX(-8deg); }
.logo-en { font: italic 20px/22px "Liberation Sans", sans-serif; white-space: nowrap; }
```
